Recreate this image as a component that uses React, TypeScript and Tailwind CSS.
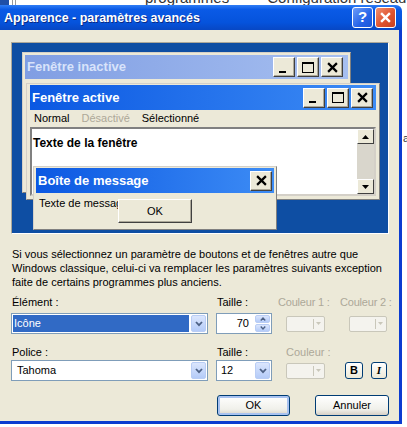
import React from "react";

const font = "font-['Liberation_Sans',Arial,sans-serif]";

/* petits glyphes */
function Chevron({ className = "" }: { className?: string }) {
  return (
    <svg width="8" height="6" viewBox="0 0 8 6" className={className}>
      <path d="M1 1 L4 4.2 L7 1" fill="none" stroke="currentColor" strokeWidth="1.8" />
    </svg>
  );
}

function XGlyph({ size = 10, stroke = 2 }: { size?: number; stroke?: number }) {
  return (
    <svg width={size} height={size} viewBox="0 0 10 10">
      <path d="M1 1 L9 9 M9 1 L1 9" stroke="currentColor" strokeWidth={stroke} />
    </svg>
  );
}

/* bouton de légende style classique dans l'aperçu */
function CapBtn({ kind }: { kind: "min" | "max" | "close" }) {
  return (
    <div className="flex h-[20px] w-[22px] items-center justify-center border border-t-white border-l-white border-r-[#404040] border-b-[#404040] bg-[#ece9d8] shadow-[inset_-1px_-1px_0_#aca899]">
      {kind === "min" && <div className="mt-[9px] mr-[3px] h-[2px] w-[7px] bg-black" />}
      {kind === "max" && <div className="h-[11px] w-[12px] border border-t-[2px] border-black" />}
      {kind === "close" && (
        <span className="text-black">
          <XGlyph size={11} stroke={2} />
        </span>
      )}
    </div>
  );
}

function ScrollArrow({ up }: { up?: boolean }) {
  return (
    <div className="flex h-[15px] w-[17px] items-center justify-center border border-t-white border-l-white border-r-[#404040] border-b-[#404040] bg-[#ece9d8]">
      <svg width="7" height="4" viewBox="0 0 7 4">
        <path d={up ? "M0 4 L3.5 0 L7 4 Z" : "M0 0 L3.5 4 L7 0 Z"} fill="#000" />
      </svg>
    </div>
  );
}

function DropBtn() {
  return (
    <div className="flex h-[17px] w-[15px] items-center justify-center rounded-[2px] border border-[#b9cdf5] bg-[linear-gradient(#dbe6fd,#b4cbf8)] text-[#4d6185]">
      <Chevron />
    </div>
  );
}

function ColorBtn({ w }: { w: string }) {
  return (
    <div className={`flex h-[16px] items-center justify-end rounded-[2px] border border-[#c9c7ba] bg-[#f4f3ee] pr-[3px] ${w}`}>
      <div className="mr-[2px] h-[10px] w-px bg-[#c9c7ba]" />
      <svg width="5" height="3" viewBox="0 0 5 3">
        <path d="M0 0 L2.5 3 L5 0 Z" fill="#c9c7ba" />
      </svg>
    </div>
  );
}

function XpButton({ children, def, w }: { children: React.ReactNode; def?: boolean; w: string }) {
  return (
    <div
      className={`flex h-[21px] items-center justify-center rounded-[3px] border border-[#003c74] bg-[linear-gradient(#ffffff,#f0f0ea_70%,#d6d0c5)] text-[11px] text-black ${w} ${
        def ? "shadow-[inset_0_0_0_2px_#a8c2f0]" : ""
      }`}
    >
      {children}
    </div>
  );
}

export default function App() {
  return (
    <div className={`relative h-[427px] w-[407px] overflow-hidden bg-white ${font}`}>
      {/* fenêtre d'arrière-plan */}
      <div className="flex h-[5px] overflow-hidden whitespace-nowrap text-[15px] leading-none text-[#333]">
        <div className="h-[5px] w-[9px] bg-[#1f4fa8]" />
        <div className="ml-[3px] h-[5px] w-[4px] border-x border-[#999]" />
        <span className="ml-[129px] mt-[-10px]">programmes</span>
        <span className="ml-[38px] mt-[-10px]">Configuration réseau</span>
      </div>

      <div className="flex">
        {/* boîte de dialogue */}
        <div className="flex w-[402px] flex-col">
          {/* barre de titre */}
          <div className="flex h-[25px] items-center rounded-tr-[6px] bg-[linear-gradient(#2f7df5,#0a5ae6_18%,#0553dc_70%,#0747c4)] pl-[4px] pr-[6px]">
            <span className="pt-[2px] text-[12.5px] font-bold text-white [text-shadow:1px_1px_0_#0a2b86]">
              Apparence - paramètres avancés
            </span>
            <div className="ml-auto flex gap-[2px]">
              <div className="flex h-[21px] w-[21px] items-center justify-center rounded-[3px] border border-white bg-[linear-gradient(135deg,#6d9cf8,#2663e8_60%,#1b55d8)] text-[15px] font-bold text-white">
                ?
              </div>
              <div className="flex h-[21px] w-[21px] items-center justify-center rounded-[3px] border border-white bg-[linear-gradient(135deg,#f09070,#e0542f_55%,#c8401e)] text-white">
                <XGlyph size={11} stroke={2.2} />
              </div>
            </div>
          </div>

          {/* corps */}
          <div className="flex flex-col border-r-[3px] border-b-[3px] border-[#0b3cd0] bg-[#ece9d8] px-[11px] pt-[12px] pb-[5px]">
            {/* aperçu */}
            <div className="relative h-[192px] w-[378px] border border-t-[#aca899] border-l-[#aca899] border-b-white border-r-white bg-[#0e4ea3]">
              {/* fenêtre inactive */}
              <div className="absolute left-[10px] top-[9px] h-[141px] w-[329px] border border-[#d4d0c8] border-r-[#808080] border-b-[#808080] bg-[#ece9d8] p-[2px]">
                <div className="flex h-[24px] items-center bg-[linear-gradient(to_right,#809ee3,#a6bff0)] pl-[2px] pr-[5px]">
                  <span className="text-[13px] font-bold text-[#d8e3fa]">Fenêtre inactive</span>
                  <div className="ml-auto flex gap-[2px]">
                    <CapBtn kind="min" />
                    <CapBtn kind="max" />
                    <CapBtn kind="close" />
                  </div>
                </div>
              </div>

              {/* fenêtre active */}
              <div className="absolute left-[14px] top-[40px] flex h-[117px] w-[354px] flex-col border border-[#d4d0c8] border-r-[#808080] border-b-[#808080] bg-[#ece9d8] px-[3px] pt-[1px]">
                <div className="flex h-[25px] shrink-0 items-center bg-[linear-gradient(to_right,#0b58e2,#3d8cf5)] pl-[2px] pr-[3px]">
                  <span className="text-[13px] font-bold text-white">Fenêtre active</span>
                  <div className="ml-auto flex gap-[2px]">
                    <CapBtn kind="min" />
                    <CapBtn kind="max" />
                    <CapBtn kind="close" />
                  </div>
                </div>
                <div className="flex h-[17px] shrink-0 items-center gap-[12px] pl-[4px] text-[11px]">
                  <span className="text-black">Normal</span>
                  <span className="text-[#aca899]">Désactivé</span>
                  <span className="text-black">Sélectionné</span>
                </div>
                <div className="flex h-[69px] shrink-0 border-2 border-t-[#808080] border-l-[#808080] border-b-[#d4d0c8] border-r-[#d4d0c8] bg-white">
                  <div className="flex-1 pl-[1px] pt-[8px] text-[12px] font-bold leading-none text-black">
                    Texte de la fenêtre
                  </div>
                  <div className="flex w-[17px] flex-col bg-[#d9d6cc]">
                    <ScrollArrow up />
                    <div className="flex-1" />
                    <ScrollArrow />
                  </div>
                </div>
              </div>

              {/* boîte de message */}
              <div className="absolute left-[21px] top-[123px] h-[64px] w-[244px] border border-[#d4d0c8] border-r-[#808080] border-b-[#808080] bg-[#ece9d8] px-[2px] pt-px">
                <div className="flex h-[25px] items-center bg-[linear-gradient(to_right,#0b58e2,#3d8cf5)] pl-[2px] pr-[2px]">
                  <span className="text-[13px] font-bold text-white">Boîte de message</span>
                  <div className="ml-auto">
                    <CapBtn kind="close" />
                  </div>
                </div>
                <div className="relative">
                  <div className="pl-[3px] pt-[2px] text-[11px] text-black">Texte de message</div>
                  <div className="absolute left-[82px] top-[6px] flex h-[24px] w-[74px] items-center justify-center border border-t-white border-l-white border-r-[#404040] border-b-[#404040] bg-[#ece9d8] text-[11px] text-black shadow-[inset_-1px_-1px_0_#aca899]">
                    OK
                  </div>
                </div>
              </div>
            </div>

            {/* texte explicatif */}
            <p className="mt-[13px] pl-px text-[11px] leading-[14px] text-black">
              Si vous sélectionnez un paramètre de boutons et de fenêtres autre que Windows classique, celui-ci va
              remplacer les paramètres suivants exception faite de certains programmes plus anciens.
            </p>

            {/* ligne Élément */}
            <div className="mt-[6px] flex whitespace-nowrap text-[11px] leading-[14px]">
              <span className="w-[205px] shrink-0 pl-px text-black">Élément :</span>
              <span className="w-[61px] shrink-0 pl-px text-black">Taille :</span>
              <span className="w-[62px] shrink-0 pl-px tracking-[-0.2px] text-[#aca899]">Couleur 1 :</span>
              <span className="pl-px tracking-[-0.2px] text-[#aca899]">Couleur 2 :</span>
            </div>
            <div className="mt-[4px] flex items-center">
              <div className="flex h-[21px] w-[197px] items-center border border-[#7f9db9] bg-white pl-[1px] pr-[1px]">
                <div className="flex h-[17px] flex-1 items-center bg-[#316ac5] pl-[1px] text-[11px] text-white">Icône</div>
                <div className="ml-[2px]">
                  <DropBtn />
                </div>
              </div>
              <div className="ml-[8px] flex h-[21px] w-[56px] items-center border border-[#7f9db9] bg-white pr-px">
                <span className="flex-1 pr-[6px] text-right text-[11px] text-black">70</span>
                <div className="flex h-[17px] w-[15px] flex-col gap-px">
                  <div className="flex flex-1 items-center justify-center rounded-[2px] border border-[#b9cdf5] bg-[linear-gradient(#dbe6fd,#b4cbf8)] text-[#4d6185]">
                    <Chevron className="rotate-180 scale-75" />
                  </div>
                  <div className="flex flex-1 items-center justify-center rounded-[2px] border border-[#b9cdf5] bg-[linear-gradient(#dbe6fd,#b4cbf8)] text-[#4d6185]">
                    <Chevron className="scale-75" />
                  </div>
                </div>
              </div>
              <div className="ml-[14px]">
                <ColorBtn w="w-[39px]" />
              </div>
              <div className="ml-[24px]">
                <ColorBtn w="w-[38px]" />
              </div>
            </div>

            {/* ligne Police */}
            <div className="mt-[11px] flex whitespace-nowrap text-[11px] leading-[14px]">
              <span className="w-[205px] shrink-0 pl-px text-black">Police :</span>
              <span className="w-[69px] shrink-0 pl-px text-black">Taille :</span>
              <span className="pl-px text-[#aca899]">Couleur :</span>
            </div>
            <div className="mt-px flex items-center">
              <div className="flex h-[21px] w-[197px] items-center border border-[#7f9db9] bg-white pl-[5px] pr-[1px]">
                <span className="flex-1 text-[11px] text-black">Tahoma</span>
                <DropBtn />
              </div>
              <div className="ml-[8px] flex h-[21px] w-[56px] items-center border border-[#7f9db9] bg-white pl-[4px] pr-[1px]">
                <span className="flex-1 text-[11px] text-black">12</span>
                <DropBtn />
              </div>
              <div className="ml-[14px]">
                <ColorBtn w="w-[39px]" />
              </div>
              <div className="ml-[20px] flex h-[17px] w-[18px] items-center justify-center rounded-[3px] border border-[#003c74] bg-[linear-gradient(#ffffff,#ece9d8)] text-[11px] font-bold text-black">
                B
              </div>
              <div className="ml-[8px] flex h-[17px] w-[16px] items-center justify-center rounded-[3px] border border-[#003c74] bg-[linear-gradient(#ffffff,#ece9d8)] font-['Liberation_Serif',serif] text-[11px] font-bold italic text-black">
                I
              </div>
            </div>

            {/* boutons */}
            <div className="mt-[14px] flex">
              <div className="ml-[206px]">
                <XpButton def w="w-[73px]">OK</XpButton>
              </div>
              <div className="ml-[25px]">
                <XpButton w="w-[74px]">Annuler</XpButton>
              </div>
            </div>
          </div>
        </div>

        {/* bord de la fenêtre derrière */}
        <div className="relative flex-1">
          <span className="absolute left-[1px] top-[128px] text-[11px] leading-none text-[#333]">a</span>
        </div>
      </div>
    </div>
  );
}
